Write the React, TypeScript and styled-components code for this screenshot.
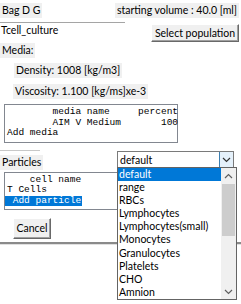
import React from "react";
import styled, { createGlobalStyle } from "styled-components";

const GlobalStyle = createGlobalStyle`
  html, body {
    margin: 0;
    padding: 0;
    background: #ffffff;
  }
`;

const Window = styled.div`
  position: relative;
  width: 241px;
  height: 304px;
  overflow: hidden;
  background: #ffffff;
  font-family: Lato, "Open Sans", sans-serif;
  font-size: 10.5px;
  color: #000000;
`;

const Row = styled.div<{ top?: number }>`
  display: flex;
  justify-content: space-between;
  align-items: flex-start;
  margin-top: ${({ top }) => top ?? 0}px;
`;

const Label = styled.div<{ indent?: number; top?: number }>`
  display: inline-block;
  height: 15px;
  line-height: 15px;
  padding: 0 2px;
  margin-left: ${({ indent }) => indent ?? 0}px;
  margin-top: ${({ top }) => top ?? 0}px;
  background: #f0f0f0;
  white-space: nowrap;
`;

const Block = styled.div<{ top?: number }>`
  margin-top: ${({ top }) => top ?? 0}px;
`;

const Entry = styled.div`
  width: 125px;
  height: 17px;
  line-height: 15px;
  padding-left: 1px;
  border-top: 1px solid #a5a5a5;
  box-sizing: border-box;
`;

const Button = styled.div<{ width: number; height?: number }>`
  width: ${({ width }) => width}px;
  height: ${({ height }) => height ?? 18}px;
  line-height: ${({ height }) => (height ?? 18) - 2}px;
  text-align: center;
  background: #f0f0f0;
  border: 1px solid #ffffff;
  border-right-color: #696969;
  border-bottom-color: #696969;
  box-shadow: inset -1px -1px 0 #a0a0a0;
  box-sizing: border-box;
  white-space: nowrap;
`;

const ListBox = styled.div<{ width: number; top: number }>`
  width: ${({ width }) => width}px;
  margin-left: 4px;
  margin-top: ${({ top }) => top}px;
  border: 1px solid #828790;
  padding: 2px 0 3px 0;
  box-sizing: border-box;
  font-family: "Liberation Mono", "DejaVu Sans Mono", monospace;
  font-size: 9.5px;
  line-height: 10.5px;
`;

const ListLine = styled.div<{ selected?: boolean }>`
  white-space: pre;
  padding-left: 2px;
  width: fit-content;
  padding-right: 1px;
  background: ${({ selected }) => (selected ? "#0078d7" : "transparent")};
  color: ${({ selected }) => (selected ? "#ffffff" : "#000000")};
`;

const ParticleRow = styled.div`
  display: grid;
  grid-template-columns: 117px 117px;
  align-items: start;
`;

const Combo = styled.div`
  display: flex;
  height: 18px;
  border: 1px solid #7a7a7a;
  box-sizing: border-box;
  background: #ffffff;
`;

const ComboText = styled.div`
  flex: 1;
  line-height: 16px;
  padding-left: 2px;
`;

const ComboArrow = styled.div`
  width: 13px;
  display: flex;
  align-items: center;
  justify-content: center;
  background: #e5f1fb;
  border-left: 1px solid #3c7fb1;
`;

const Separator = styled.div<{ top: number }>`
  margin-top: ${({ top }) => top}px;
  height: 2px;
  background: #8a8a8a;
  border-bottom: 1px solid #e0e0e0;
`;

const ThinRule = styled.div`
  width: 40px;
  height: 1px;
  margin-top: 7px;
  background: #c8c8c8;
`;

const DropList = styled.div`
  position: absolute;
  left: 117px;
  top: 167px;
  width: 120px;
  height: 133px;
  display: flex;
  border: 1px solid #646464;
  box-sizing: border-box;
  background: #ffffff;
`;

const Options = styled.div`
  flex: 1;
`;

const Option = styled.div<{ selected?: boolean }>`
  height: 13.1px;
  line-height: 13px;
  padding-left: 1px;
  white-space: nowrap;
  background: ${({ selected }) => (selected ? "#0078d7" : "transparent")};
  color: ${({ selected }) => (selected ? "#ffffff" : "#000000")};
`;

const ScrollBar = styled.div`
  width: 15px;
  display: flex;
  flex-direction: column;
  background: #f0f0f0;
`;

const ScrollArrow = styled.div`
  height: 15px;
  display: flex;
  align-items: center;
  justify-content: center;
`;

const ScrollTrack = styled.div`
  flex: 1;
  display: flex;
  flex-direction: column;
  padding: 0 1px;
`;

const Thumb = styled.div`
  height: 52px;
  margin-top: 1px;
  background: #cdcdcd;
`;

const Chevron = ({ up, color }: { up?: boolean; color: string }) => (
  <svg width="9" height="6" viewBox="0 0 9 6">
    <path
      d={up ? "M1 5 L4.5 1.5 L8 5" : "M1 1 L4.5 4.5 L8 1"}
      fill="none"
      stroke={color}
      strokeWidth="1.2"
    />
  </svg>
);

const options = [
  "default",
  "range",
  "RBCs",
  "Lymphocytes",
  "Lymphocytes(small)",
  "Monocytes",
  "Granulocytes",
  "Platelets",
  "CHO",
  "Amnion",
];

export default function App() {
  return (
    <>
      <GlobalStyle />
      <Window>
        <Row top={3}>
          <Label>Bag D G</Label>
          <Label style={{ marginRight: 2 }}>starting volume : 40.0 [ml]</Label>
        </Row>
        <Row top={4}>
          <Entry>Tcell_culture</Entry>
          <Button width={88} style={{ marginRight: 2, marginTop: 2 }}>
            Select population
          </Button>
        </Row>
        <Block top={1}>
          <Label>Media:</Label>
        </Block>
        <Block top={5}>
          <Label indent={14}>Density: 1008 [kg/m3]</Label>
        </Block>
        <Block top={6}>
          <Label indent={13}>Viscosity: 1.100 [kg/ms]xe-3</Label>
        </Block>
        <ListBox width={174} top={5}>
          <ListLine>{"        media name     percent"}</ListLine>
          <ListLine>{"        AIM V Medium       100"}</ListLine>
          <ListLine>{"Add media"}</ListLine>
        </ListBox>
        <ThinRule />
        <ParticleRow>
          <Label top={4} style={{ justifySelf: "start" }}>
            Particles
          </Label>
          <Combo>
            <ComboText>default</ComboText>
            <ComboArrow>
              <Chevron color="#333333" />
            </ComboArrow>
          </Combo>
        </ParticleRow>
        <ListBox width={180} top={2}>
          <ListLine>{"    cell name"}</ListLine>
          <ListLine>{"T Cells"}</ListLine>
          <ListLine selected>{" Add particle"}</ListLine>
        </ListBox>
        <Block top={8}>
          <Button width={38} height={21} style={{ marginLeft: 13 }}>
            Cancel
          </Button>
        </Block>
        <Separator top={3} />
        <DropList>
          <Options>
            {options.map((o, i) => (
              <Option key={o} selected={i === 0}>
                {o}
              </Option>
            ))}
          </Options>
          <ScrollBar>
            <ScrollArrow>
              <Chevron up color="#606060" />
            </ScrollArrow>
            <ScrollTrack>
              <Thumb />
            </ScrollTrack>
            <ScrollArrow>
              <Chevron color="#606060" />
            </ScrollArrow>
          </ScrollBar>
        </DropList>
      </Window>
    </>
  );
}
